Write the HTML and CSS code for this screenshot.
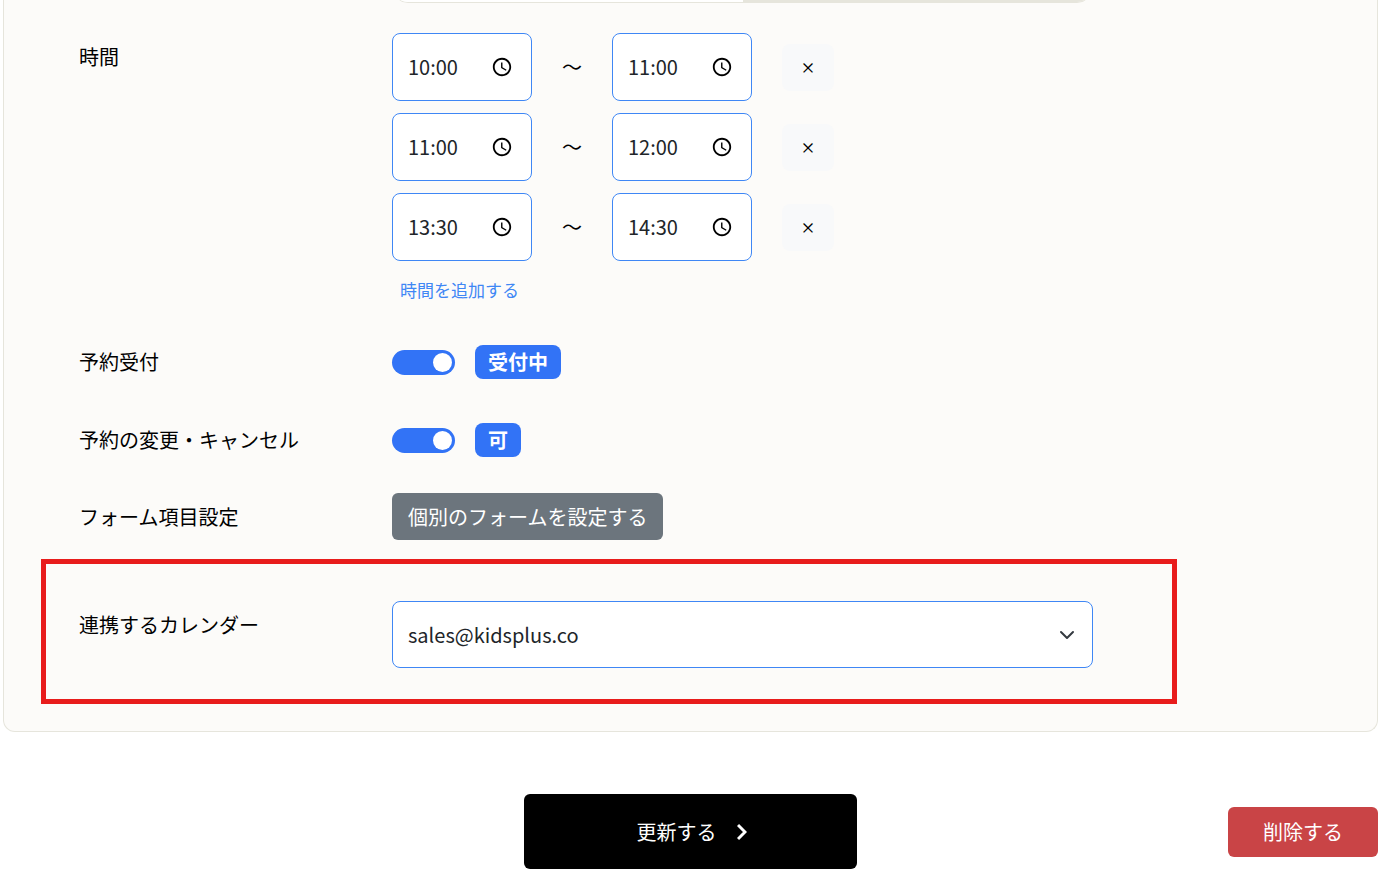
FILE: index.html
```html
<!DOCTYPE html>
<html lang="ja">
<head>
  <meta charset="UTF-8">
  <meta name="viewport" content="width=device-width, initial-scale=1.0">
  <title>予約設定</title>
  <link rel="stylesheet" href="styles.css">
</head>
<body>
  <svg class="sprite" aria-hidden="true">
    <symbol id="clock" viewBox="0 0 24 24">
      <path d="M12 2C6.48 2 2 6.48 2 12s4.48 10 10 10 10-4.48 10-10S17.52 2 12 2zM12 20c-4.42 0-8-3.58-8-8s3.58-8 8-8 8 3.58 8 8-3.58 8-8 8z"/>
      <path d="M12.5 7H11v6l5.25 3.15.75-1.23-4.5-2.67z"/>
    </symbol>
  </svg>

  <form class="page">
    <div class="card">
      <div class="tabs"><span class="tab"></span><span class="tab tab-off"></span></div>

      <div class="row row-time">
        <div class="label label-top">時間</div>
        <div class="times">
          <div class="time-row">
            <div class="time"><input type="text" value="10:00" aria-label="開始時間 1"><button type="button" aria-label="時間を選択"><svg><use href="#clock"/></svg></button></div>
            <span>～</span>
            <div class="time"><input type="text" value="11:00" aria-label="終了時間 1"><button type="button" aria-label="時間を選択"><svg><use href="#clock"/></svg></button></div>
            <button type="button" class="remove">×</button>
          </div>
          <div class="time-row">
            <div class="time"><input type="text" value="11:00" aria-label="開始時間 2"><button type="button" aria-label="時間を選択"><svg><use href="#clock"/></svg></button></div>
            <span>～</span>
            <div class="time"><input type="text" value="12:00" aria-label="終了時間 2"><button type="button" aria-label="時間を選択"><svg><use href="#clock"/></svg></button></div>
            <button type="button" class="remove">×</button>
          </div>
          <div class="time-row">
            <div class="time"><input type="text" value="13:30" aria-label="開始時間 3"><button type="button" aria-label="時間を選択"><svg><use href="#clock"/></svg></button></div>
            <span>～</span>
            <div class="time"><input type="text" value="14:30" aria-label="終了時間 3"><button type="button" aria-label="時間を選択"><svg><use href="#clock"/></svg></button></div>
            <button type="button" class="remove">×</button>
          </div>
          <a class="add" href="#">時間を追加する</a>
        </div>
      </div>

      <div class="row row-switch">
        <label class="label" for="accept">予約受付</label>
        <div class="switch-group">
          <input class="switch" type="checkbox" id="accept" checked>
          <span class="badge">受付中</span>
        </div>
      </div>

      <div class="row row-switch">
        <label class="label" for="change">予約の変更・キャンセル</label>
        <div class="switch-group">
          <input class="switch" type="checkbox" id="change" checked>
          <span class="badge">可</span>
        </div>
      </div>

      <div class="row row-form">
        <div class="label">フォーム項目設定</div>
        <div><button type="button" class="btn-form">個別のフォームを設定する</button></div>
      </div>

      <div class="row highlight">
        <label class="label label-top" for="calendar">連携するカレンダー</label>
        <select class="select" id="calendar">
          <option>sales@kidsplus.co</option>
        </select>
      </div>
    </div>

    <div class="actions">
      <button type="submit" class="btn-update">更新する
        <svg viewBox="0 0 10 18"><path d="M1 2l7 7-7 7"/></svg>
      </button>
      <button type="button" class="btn-delete">削除する</button>
    </div>
  </form>
</body>
</html>
```

FILE: styles.css
```css
* { box-sizing: border-box; }
body { margin: 0; background: #fff; color: #000; font-family: "Noto Sans CJK JP", sans-serif; font-size: 20px; line-height: 30px; }
button, input, select { font: inherit; margin: 0; }
button { border: 0; cursor: pointer; }
.sprite { display: none; }
.page { padding: 0 4px 0 3px; }

.card { overflow: hidden; padding: 0 0 27px 75px; background: #fcfbf9; border: 1px solid #e6e5dc; border-top: 0; border-radius: 0 0 12px 12px; }

/* 上のタブは下端だけ見える */
.tabs { display: flex; max-width: 701px; height: 50px; margin: -47px 0 30px 313px; border: 1px solid #e6e5dc; border-radius: 16px; overflow: hidden; }
.tab { flex: 1; background: #fff; }
.tab-off { background: #e6e5dc; }

.row { display: grid; grid-template-columns: 313px minmax(0, 701px); align-items: center; }
.label-top { align-self: start; padding-top: 9px; }
.row-time { margin-bottom: 40px; }
.row-switch { margin-bottom: 44px; }
.row-switch + .row-form { margin-top: -8px; }
.row-form { margin-bottom: 19px; }

.times { display: flex; flex-direction: column; align-items: flex-start; gap: 12px; }
.time-row { display: flex; align-items: center; gap: 30px; }
.time { display: flex; align-items: center; width: 140px; height: 68px; padding: 0 18px 0 15px; background: #fff; border: 1px solid #3f87f5; border-radius: 8px; }
.time input { flex: 1; min-width: 0; padding: 0; border: 0; background: none; color: #212529; outline: 0; }
.time button { padding: 0; background: none; }
.time svg { display: block; width: 22px; height: 22px; }
.remove { width: 52px; height: 47px; padding: 0; background: #f8f9fa; border-radius: 8px; color: #000; font-size: 15px; font-weight: 500; }
.add { margin-top: 2px; padding-left: 8px; font-size: 17px; color: #3f87f5; text-decoration: none; }

.switch-group { display: flex; align-items: center; gap: 20px; }
.switch { appearance: none; display: flex; align-items: center; justify-content: flex-end; width: 63px; height: 25px; padding: 3px; background: #3273f6; border-radius: 13px; }
.switch::before { content: ""; width: 19px; height: 19px; border-radius: 50%; background: #fff; }
.switch:not(:checked) { justify-content: flex-start; background: #adb5bd; }
.badge { padding: 2px 13px; background: #3273f6; border-radius: 8px; color: #fff; font-weight: 700; }

.btn-form { height: 47px; padding: 0 16px; background: #6c757d; border-radius: 6px; color: #fff; }

.highlight { margin: 0 200px 0 -38px; padding: 37px 33px 31px; border: 5px solid #e81c1c; }
.select { appearance: none; width: 100%; height: 67px; padding: 0 48px 0 15px; border: 1px solid #3f87f5; border-radius: 8px; color: #212529; background: #fff url("data:image/svg+xml,%3csvg xmlns='http://www.w3.org/2000/svg' viewBox='0 0 16 16'%3e%3cpath fill='none' stroke='%23343a40' stroke-linecap='round' stroke-linejoin='round' stroke-width='2' d='m2 5 6 6 6-6'/%3e%3c/svg%3e") no-repeat right 17px center / 16px 16px; }

.actions { display: grid; grid-template-columns: 1fr 333px 1fr; align-items: center; padding-top: 62px; }
.btn-update { grid-column: 2; display: flex; align-items: center; justify-content: center; gap: 20px; height: 75px; padding: 0 0 0 2px; background: #000; border-radius: 6px; color: #fff; }
.btn-update svg { width: 10px; height: 18px; fill: none; stroke: #fff; stroke-width: 3; }
.btn-delete { justify-self: end; width: 150px; height: 50px; background: #c94446; border-radius: 6px; color: #fff; }
```
